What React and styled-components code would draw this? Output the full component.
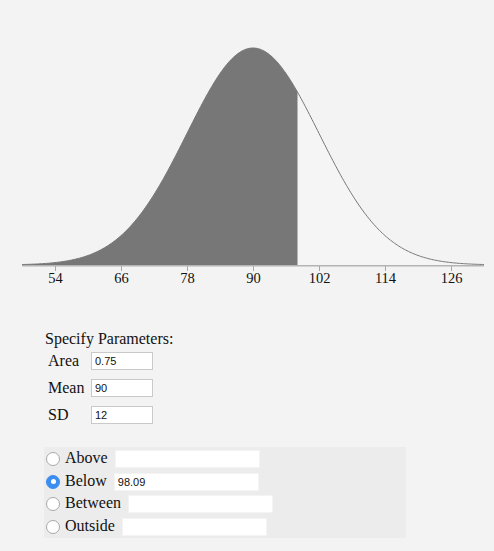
import React from "react";
import styled, { createGlobalStyle } from "styled-components";

const Global = createGlobalStyle`
  html, body { margin: 0; padding: 0; background: #f3f3f3; }
  body { font-family: "Liberation Serif", "Times New Roman", serif; color: #111; }
`;

const Page = styled.div`
  width: 494px;
  height: 551px;
  background: #f3f3f3;
  overflow: hidden;
`;

const Chart = styled.svg`
  display: block;
  width: 494px;
  height: 300px;
`;

const Form = styled.div`
  margin: 30px 0 0 45px;
`;

const Title = styled.div`
  font-size: 16px;
  line-height: 18px;
`;

const Params = styled.div`
  display: grid;
  grid-template-columns: 43px 62px;
  row-gap: 9px;
  margin: 4px 0 0 3px;
  align-items: center;
`;

const ParamLabel = styled.span`
  font-size: 16px;
  line-height: 18px;
`;

const ParamInput = styled.input`
  box-sizing: border-box;
  width: 62px;
  height: 18px;
  margin: 0;
  border: 1px solid #c9c9c9;
  background: #fff;
  padding: 0 3px;
  font-family: "Liberation Sans", Arial, sans-serif;
  font-size: 11px;
  color: #111;
  outline: none;
`;

const Panel = styled.div`
  margin: 23px 0 0 -1px;
  width: 362px;
  height: 91px;
  background: #ececec;
  display: flex;
  flex-direction: column;
  padding-top: 1px;
  box-sizing: border-box;
`;

const Row = styled.label`
  display: flex;
  align-items: center;
  height: 23px;
  padding-left: 2px;
`;

const Radio = styled.span`
  box-sizing: border-box;
  width: 14px;
  height: 14px;
  border-radius: 50%;
  flex: none;
  margin-right: 5px;
  display: flex;
  align-items: center;
  justify-content: center;
  background: ${(p) => (p.$checked ? "#3b8ef0" : "#fff")};
  border: 1px solid ${(p) => (p.$checked ? "#3b8ef0" : "#a9a9a9")};
  &::after {
    content: "";
    width: 5px;
    height: 5px;
    border-radius: 50%;
    background: #fff;
    display: ${(p) => (p.$checked ? "block" : "none")};
  }
`;

const RowLabel = styled.span`
  font-size: 16px;
  line-height: 18px;
  margin-right: 7px;
  position: relative;
  top: -1px;
`;

const RowInput = styled.input`
  box-sizing: border-box;
  width: 145px;
  height: 18px;
  margin: 0;
  border: 1px solid #f4f4f4;
  background: #fff;
  padding: 0 3px;
  font-family: "Liberation Sans", Arial, sans-serif;
  font-size: 11px;
  color: #111;
  outline: none;
`;

const mean = 90;
const sd = 12;
const x0 = 253;
const scale = 5.5;
const base = 265;
const peak = 217;
const toX = (v) => x0 + (v - mean) * scale;
const toY = (v) => base - peak * Math.exp(-0.5 * ((v - mean) / sd) ** 2);

function curvePoints(a, b, step = 0.25) {
  const pts = [];
  for (let v = a; v <= b + 1e-9; v += step) pts.push([toX(v), toY(v)]);
  if (pts[pts.length - 1][0] !== toX(b)) pts.push([toX(b), toY(b)]);
  return pts;
}

const lo = 48;
const hi = 132;
const cut = 98.09;

const full = curvePoints(lo, hi);
const shaded = curvePoints(lo, cut, 0.2);
const rest = curvePoints(cut, hi);

const line = (pts) => pts.map((p, i) => `${i ? "L" : "M"}${p[0].toFixed(2)},${p[1].toFixed(2)}`).join(" ");

const shadedPath = `${line(shaded)} L${toX(cut).toFixed(2)},${base} L${toX(lo)},${base} Z`;
const restPath = `${line(rest)} L${toX(hi)},${base} L${toX(cut).toFixed(2)},${base} Z`;

const ticks = [54, 66, 78, 90, 102, 114, 126];

export default function App() {
  return (
    <Page>
      <Global />
      <Chart viewBox="0 0 494 300">
        <path d={restPath} fill="#f5f5f5" />
        <path d={shadedPath} fill="#777777" />
        <path d={line(full)} fill="none" stroke="#777777" strokeWidth="1" />
        <line x1="22" y1="265.7" x2="484" y2="265.7" stroke="#b4b4b4" strokeWidth="1.6" />
        {ticks.map((t) => (
          <g key={t}>
            <line x1={toX(t) + 0.5} y1="266" x2={toX(t) + 0.5} y2="271" stroke="#a8a8a8" strokeWidth="1" />
            <text
              x={toX(t) + 0.5}
              y="283"
              textAnchor="middle"
              fontFamily="Liberation Serif, Times New Roman, serif"
              fontSize="14.5"
              fill="#111"
            >
              {t}
            </text>
          </g>
        ))}
      </Chart>
      <Form>
        <Title>Specify Parameters:</Title>
        <Params>
          <ParamLabel>Area</ParamLabel>
          <ParamInput defaultValue="0.75" />
          <ParamLabel>Mean</ParamLabel>
          <ParamInput defaultValue="90" />
          <ParamLabel>SD</ParamLabel>
          <ParamInput defaultValue="12" />
        </Params>
        <Panel>
          <Row>
            <Radio />
            <RowLabel>Above</RowLabel>
            <RowInput defaultValue="" />
          </Row>
          <Row>
            <Radio $checked />
            <RowLabel>Below</RowLabel>
            <RowInput defaultValue="98.09" />
          </Row>
          <Row>
            <Radio />
            <RowLabel>Between</RowLabel>
            <RowInput defaultValue="" />
          </Row>
          <Row>
            <Radio />
            <RowLabel>Outside</RowLabel>
            <RowInput defaultValue="" />
          </Row>
        </Panel>
      </Form>
    </Page>
  );
}
